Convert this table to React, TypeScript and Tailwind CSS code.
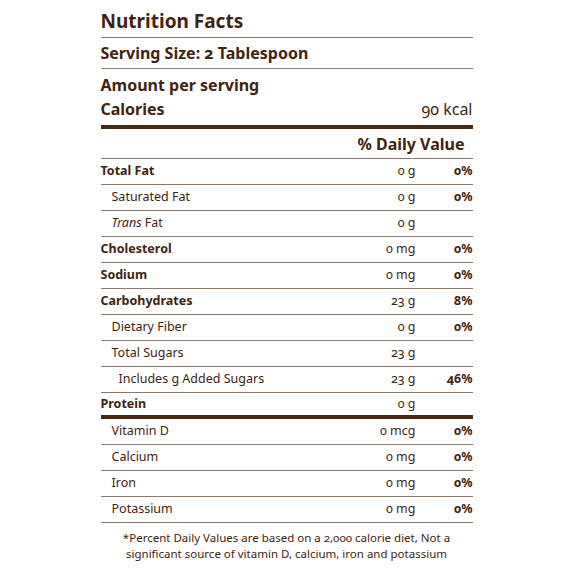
import React from 'react';

type Row = {
  label: React.ReactNode;
  amount: string;
  dv?: string;
  bold?: boolean;
  indent?: 0 | 1 | 2;
  thickBelow?: boolean;
};

const rows: Row[] = [
  { label: 'Total Fat', amount: '0 g', dv: '0%', bold: true },
  { label: 'Saturated Fat', amount: '0 g', dv: '0%', indent: 1 },
  { label: <><em>Trans</em> Fat</>, amount: '0 g', indent: 1 },
  { label: 'Cholesterol', amount: '0 mg', dv: '0%', bold: true },
  { label: 'Sodium', amount: '0 mg', dv: '0%', bold: true },
  { label: 'Carbohydrates', amount: '23 g', dv: '8%', bold: true },
  { label: 'Dietary Fiber', amount: '0 g', dv: '0%', indent: 1 },
  { label: 'Total Sugars', amount: '23 g', indent: 1 },
  { label: 'Includes g Added Sugars', amount: '23 g', dv: '46%', indent: 2 },
  { label: 'Protein', amount: '0 g', bold: true, thickBelow: true },
  { label: 'Vitamin D', amount: '0 mcg', dv: '0%', indent: 1 },
  { label: 'Calcium', amount: '0 mg', dv: '0%', indent: 1 },
  { label: 'Iron', amount: '0 mg', dv: '0%', indent: 1 },
  { label: 'Potassium', amount: '0 mg', dv: '0%', indent: 1 },
];

const indentClass = ['pl-0', 'pl-[11px]', 'pl-[18px]'];

const NutritionRow: React.FC<{ row: Row }> = ({ row }) => (
  <div
    className={`flex items-center h-[26px] text-[12.5px] ${
      row.thickBelow ? 'border-b-[4px] border-[#4a2b12]' : 'border-b border-[#8c7968]'
    }`}
  >
    <div className={`flex-1 ${indentClass[row.indent ?? 0]} ${row.bold ? 'font-bold' : ''}`}>{row.label}</div>
    <div className="w-[80px] text-right">{row.amount}</div>
    <div className="w-[57px] text-right font-bold">{row.dv}</div>
  </div>
);

const App: React.FC = () => {
  return (
    <div className="w-[573px] h-[573px] bg-white flex justify-center">
      <div className="w-[372px] pt-[8px] text-[#3f2410] font-['Noto_Sans',sans-serif] oldstyle-nums">
        <h1 className="text-[19px] font-bold leading-[26px] pb-[3px] border-b border-[#8c7968]">Nutrition Facts</h1>
        <div className="text-[16px] font-bold leading-[22px] py-[4px] border-b border-[#8c7968]">Serving Size: 2 Tablespoon</div>
        <div className="border-b-[4px] border-[#4a2b12] pb-[4px] pt-[4px]">
          <div className="text-[16px] font-bold leading-[24px]">Amount per serving</div>
          <div className="flex justify-between items-baseline leading-[24px]">
            <span className="text-[16px] font-bold">Calories</span>
            <span className="text-[16px]">90 kcal</span>
          </div>
        </div>
        <div className="text-right text-[16px] font-bold leading-[22px] pt-[4px] pb-[3px] pr-[8px] border-b border-[#8c7968]">% Daily Value</div>
        {rows.map((row, i) => (
          <NutritionRow key={i} row={row} />
        ))}
        <p className="text-center text-[11.5px] leading-[16px] pt-[7px]">
          *Percent Daily Values are based on a 2,000 calorie diet, Not a significant source of vitamin D, calcium, iron and potassium
        </p>
      </div>
    </div>
  );
};

export default App;
